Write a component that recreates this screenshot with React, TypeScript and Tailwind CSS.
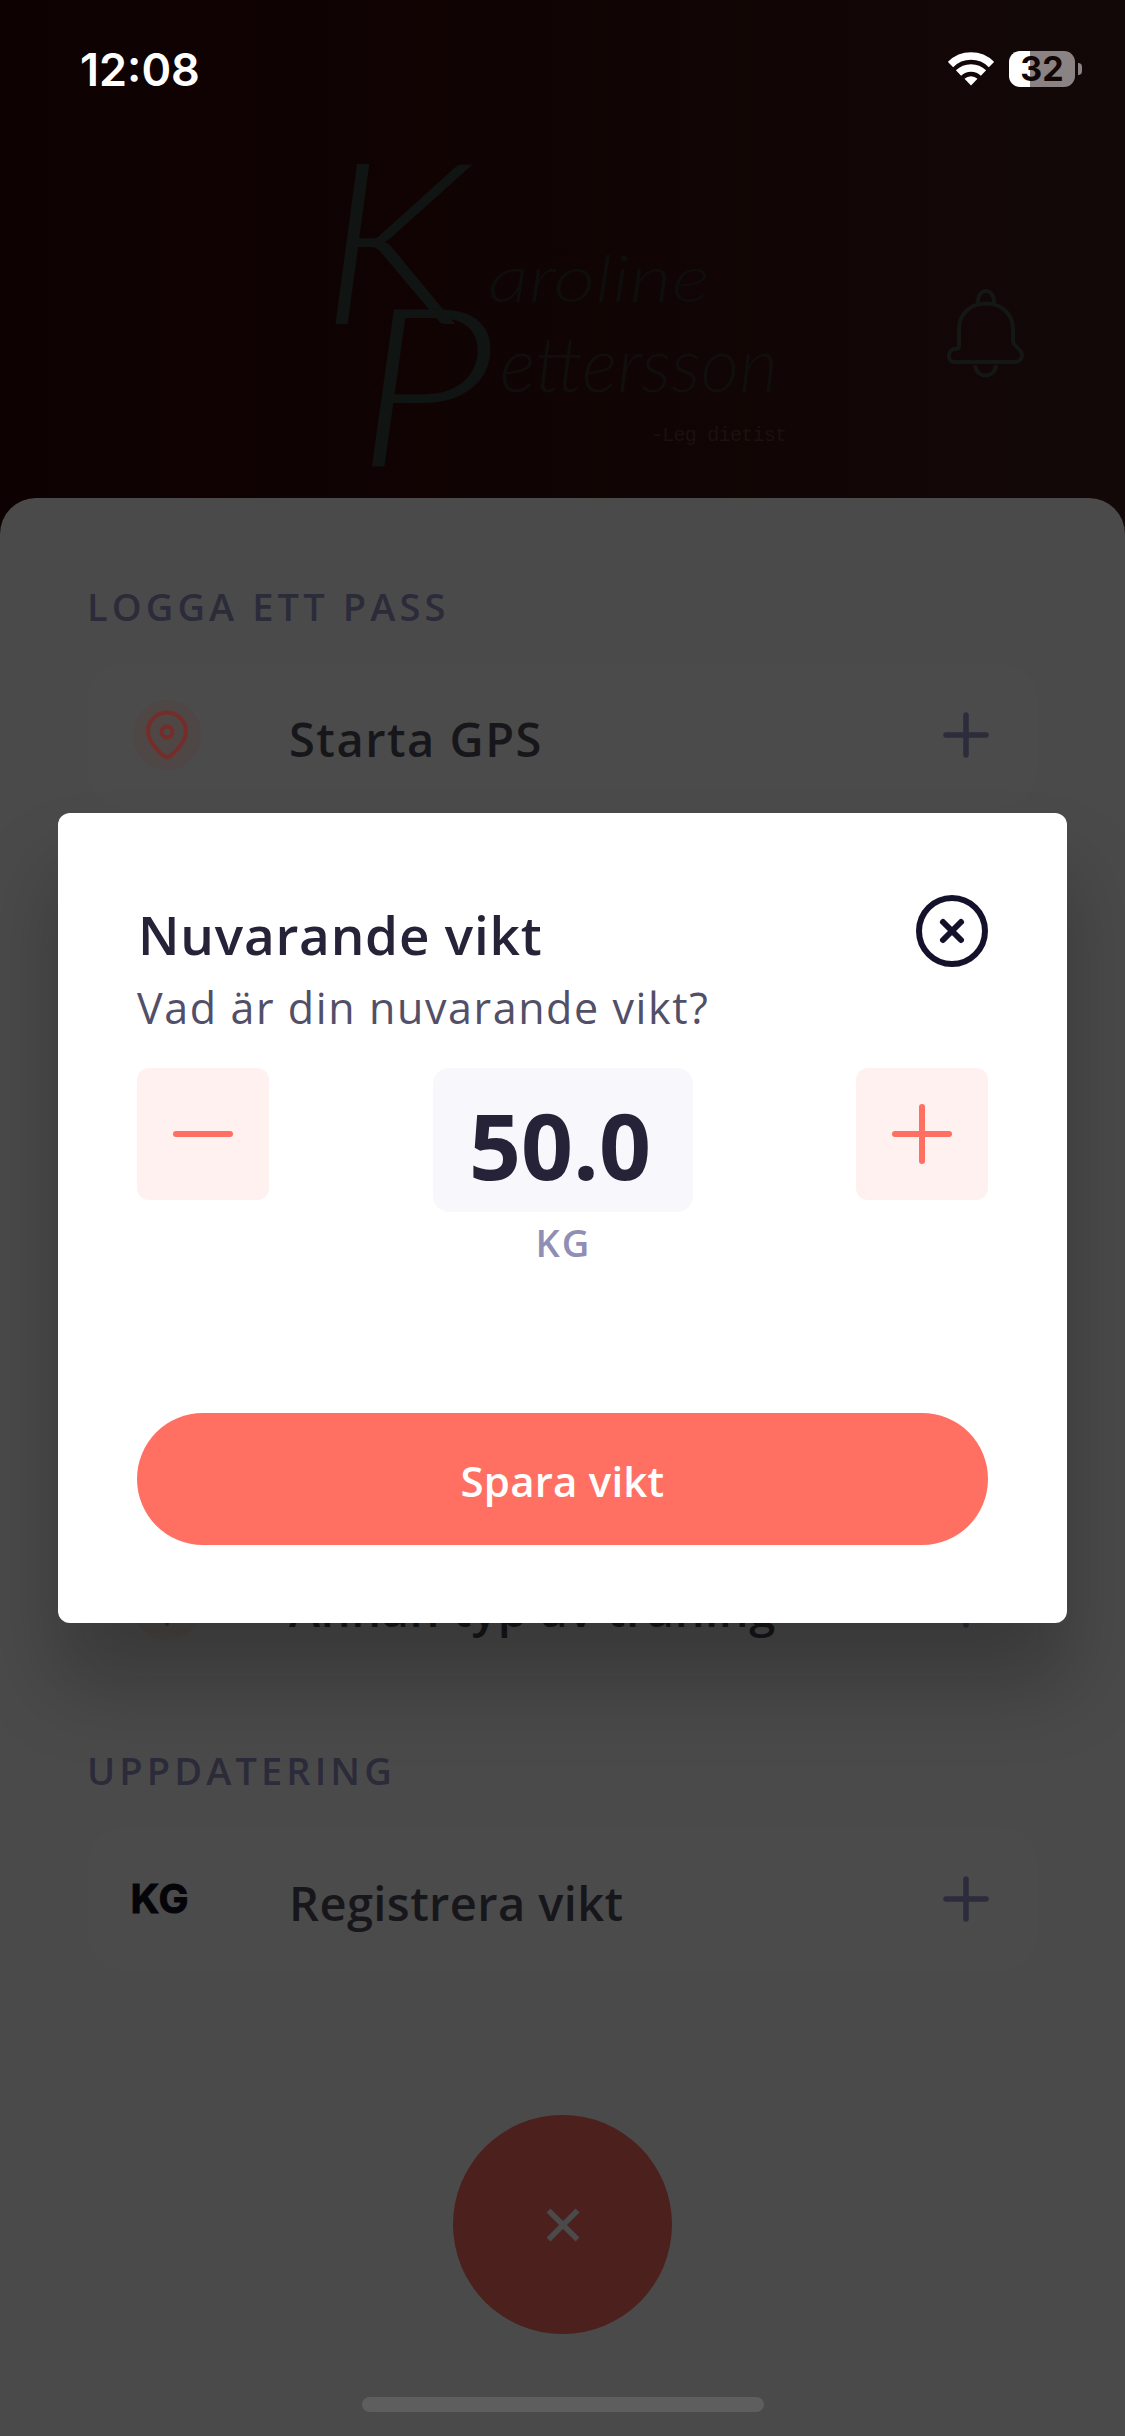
import { useState, ReactNode } from 'react';

interface ActionRowProps {
  icon: ReactNode;
  label: string;
  labelClass?: string;
}

const PlusIcon = () => (
  <svg width="46" height="46" viewBox="0 0 46 46" fill="none" stroke="#2d2c3c" strokeWidth="5.5" strokeLinecap="round">
    <path d="M23 3v40M3 23h40" />
  </svg>
);

const PinIcon = () => (
  <div className="ml-[2px] w-[70px] h-[70px] rounded-full bg-[#4e4745] flex items-center justify-center">
    <svg width="44" height="50" viewBox="0 0 44 50" fill="none" stroke="#762d29" strokeWidth="4">
      <path d="M22 47.500C19 47.500 3 33 3 21.500a19 19 0 0 1 38 0C41 33 25 47.500 22 47.500z" />
      <circle cx="22" cy="22" r="5.500" />
    </svg>
  </div>
);

const OtherIcon = () => (
  <div className="ml-[2px] w-[70px] h-[70px] rounded-full bg-[#4b4743] flex items-center justify-center">
    <svg width="44" height="44" viewBox="0 0 44 44" fill="none" stroke="#332f28" strokeWidth="4" strokeLinecap="round">
      <path d="M22 4v37M5 22h34" />
    </svg>
  </div>
);

const BellIcon = () => (
  <svg width="80" height="90" viewBox="0 0 80 90" fill="none" stroke="#141815" strokeWidth="4">
    <path d="M32 14c-1-16 17-16 16 0" />
    <path d="M13 58V40c0-34 54-34 54 0v12c0 5 9 8 9 14 0 4-3 7-7 7H9c-8 0-8-11-1-13 3 0 5-1 5-2z" />
    <path d="M29 76c1 14 20 14 21 0" />
  </svg>
);

function Logo() {
  return (
    <svg width="480" height="350" viewBox="0 0 480 350" fill="#101412" className="overflow-visible font-['Lato',sans-serif] font-light italic">
      <text x="0" y="0" fontSize="226" transform="translate(0 186) scale(1.1 1)">K</text>
      <text x="168" y="164" fontSize="66" textLength="222" lengthAdjust="spacingAndGlyphs" fill="#0e0e0c">aroline</text>
      <text x="0" y="0" fontSize="222" transform="translate(36 328) scale(1.15 1)">P</text>
      <text x="180" y="254" fontSize="76" textLength="278" lengthAdjust="spacingAndGlyphs" fill="#100f0d">ettersson</text>
      <text x="331" y="303" fontSize="20" textLength="136" className="font-['Liberation_Mono',monospace] font-normal not-italic" fill="#1b1110">-Leg dietist</text>
    </svg>
  );
}

function StatusBar() {
  return (
    <div className="h-[138px] pl-[80px] pr-[43px] flex items-center justify-between">
      <span className="font-['Inter',sans-serif] font-semibold text-[45px] leading-none text-white">12:08</span>
      <div className="flex items-center">
        <svg width="46" height="34" viewBox="0 0 46 34" fill="none" stroke="#fff" strokeWidth="7.500">
          <path d="M2.500 12.500a29 29 0 0 1 41 0" />
          <path d="M10.500 21a18 18 0 0 1 25 0" />
          <path d="M23 33.500l-6.500-6.700a9.500 9.500 0 0 1 13 0z" fill="#fff" stroke="none" />
        </svg>
        <div className="ml-[15px] w-[66px] h-9 rounded-[11px] bg-linear-to-r from-white from-[32%] to-[#8b8283] to-[32%] flex items-center justify-center">
          <span className="font-['Inter',sans-serif] font-bold text-[34px] leading-none text-[#120505]">32</span>
        </div>
        <div className="ml-[3px] w-1 h-3 rounded-r-full bg-[#8b8283]" />
      </div>
    </div>
  );
}

function ActionRow({ icon, label, labelClass = 'tracking-[0.5px]' }: ActionRowProps) {
  return (
    <div className="h-36 rounded-[36px] bg-[#4b4b4b] pl-[44px] pr-[49px] flex items-center">
      <div className="w-[70px] flex justify-center">{icon}</div>
      <span className={`ml-[88px] pt-2 flex-1 text-[47px] font-semibold text-[#17171b] ${labelClass}`}>{label}</span>
      <PlusIcon />
    </div>
  );
}

function SectionTitle({ children }: { children: ReactNode }) {
  return <h2 className="h-[54px] leading-[52px] text-[38px] font-semibold tracking-[4.1px] text-[#2c2b3a]">{children}</h2>;
}

export default function App() {
  const [weight, setWeight] = useState(50);

  return (
    <div className="relative w-[1125px] h-[2436px] overflow-hidden bg-linear-to-r from-[#0e0101] to-[#130808] font-['Open_Sans',sans-serif]">
      <StatusBar />
      <header className="h-[360px] pl-[320px] pr-[99px] flex justify-between">
        <Logo />
        <div className="pt-[151px]"><BellIcon /></div>
      </header>

      <main className="h-[1938px] rounded-t-[36px] bg-[#4a4a4a] px-[87px] pt-[82px] flex flex-col">
        <SectionTitle>LOGGA ETT PASS</SectionTitle>
        <div className="mt-[29px] flex h-[1014px] flex-col justify-between">
          <ActionRow icon={<PinIcon />} label="Starta GPS" labelClass="tracking-[1.5px]" />
          <ActionRow icon={<OtherIcon />} label="Annan typ av träning" labelClass="tracking-[0.6px]" />
        </div>
        <div className="mt-[67px]">
          <SectionTitle>UPPDATERING</SectionTitle>
        </div>
        <div className="mt-[29px]">
          <ActionRow
            icon={
              <span className="-ml-[12px] font-['Inter',sans-serif] font-bold text-[40px] leading-none tracking-[1px] text-[#050509] [-webkit-text-stroke:1px_#050509]">
                KG
              </span>
            }
            label="Registrera vikt"
            labelClass="tracking-[0.4px]"
          />
        </div>
        <button className="mt-[144px] mx-auto w-[219px] h-[219px] rounded-full bg-[#4b201d] flex items-center justify-center">
          <svg width="34" height="34" viewBox="0 0 34 34" stroke="#4a4a4a" strokeWidth="5.500">
            <path d="M2.500 2.500l29 29M31.500 2.500l-29 29" />
          </svg>
        </button>
        <div className="mt-[63px] mx-auto w-[402px] h-[15px] rounded-full bg-[#5e5e5e]" />
      </main>

      <div className="absolute inset-0 flex items-center justify-center">
        <div className="w-[1009px] h-[810px] rounded-xl bg-white px-[79px] pt-[82px] shadow-[0_60px_80px_rgba(0,0,0,0.25)]">
          <div className="h-[72px] flex items-center justify-between">
            <h1 className="pl-px pt-[6px] text-[53px] leading-none font-semibold tracking-[0.8px] text-[#262338]">Nuvarande vikt</h1>
            <button>
              <svg width="72" height="72" viewBox="0 0 72 72" fill="none" stroke="#14112a" strokeWidth="6" strokeLinecap="round">
                <circle cx="36" cy="36" r="33" />
                <path d="M27 27l18 18M45 27L27 45" />
              </svg>
            </button>
          </div>
          <p className="mt-3 h-[60px] leading-[57px] text-[43px] tracking-[1.6px] text-[#524f68]">Vad är din nuvarande vikt?</p>
          <div className="mt-[29px] flex items-start justify-between">
            <button
              onClick={() => setWeight(weight - 0.5)}
              className="w-[132px] h-[132px] rounded-xl bg-[#fff1f0] flex items-center justify-center"
            >
              <svg width="60" height="60" viewBox="0 0 60 60" stroke="#ff7062" strokeWidth="6" strokeLinecap="round">
                <path d="M3 30h54" />
              </svg>
            </button>
            <div className="flex flex-col items-center">
              <div className="w-[260px] h-36 rounded-2xl bg-[#f7f7fc] pr-[5px] pt-[10px] flex items-center justify-center text-[91px] leading-none font-bold text-[#262338]">
                {weight.toFixed(1)}
              </div>
              <span className="mt-[4px] pl-[2px] leading-[52px] text-[38px] font-semibold tracking-[2px] text-[#8f8eb4]">KG</span>
            </div>
            <button
              onClick={() => setWeight(weight + 0.5)}
              className="w-[132px] h-[132px] rounded-xl bg-[#fff1f0] flex items-center justify-center"
            >
              <svg width="60" height="60" viewBox="0 0 60 60" stroke="#ff7062" strokeWidth="6" strokeLinecap="round">
                <path d="M3 30h54M30 3v54" />
              </svg>
            </button>
          </div>
          <button className="mt-[145px] w-full h-[132px] rounded-full bg-[#ff7062] pt-[2px] text-[42px] font-semibold tracking-[0.2px] text-white">
            Spara vikt
          </button>
        </div>
      </div>
    </div>
  );
}
